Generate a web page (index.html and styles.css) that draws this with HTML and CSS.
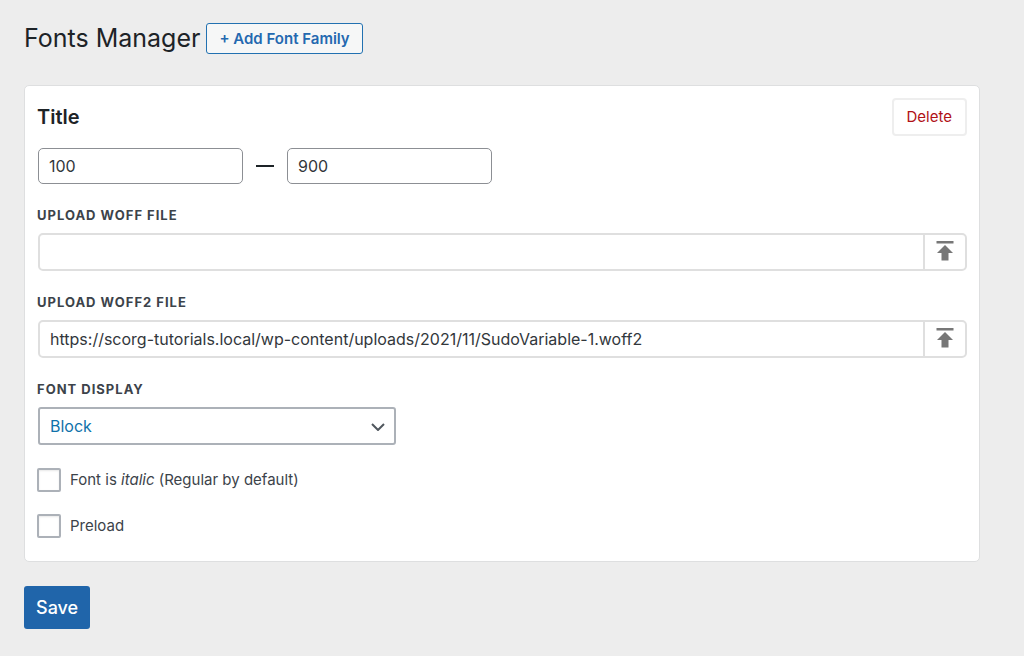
FILE: index.html
```html
<!DOCTYPE html>
<html lang="en">
<head>
<meta charset="utf-8">
<meta name="viewport" content="width=device-width, initial-scale=1">
<title>Fonts Manager</title>
<link rel="stylesheet" href="styles.css">
</head>
<body>
<main class="page">
  <header class="page-header">
    <h1 class="page-title">Fonts Manager</h1>
    <button type="button" class="add-button">+ Add Font Family</button>
  </header>
  <form class="form">
    <section class="card">
      <div class="card-header">
        <h2 class="card-title">Title</h2>
        <button type="button" class="delete-button">Delete</button>
      </div>
      <div class="weights">
        <input class="weight-input" type="text" value="100" aria-label="Minimum weight">
        <span class="dash"></span>
        <input class="weight-input" type="text" value="900" aria-label="Maximum weight">
      </div>
      <div class="field">
        <label class="field-label" for="woff">Upload WOFF File</label>
        <div class="upload">
          <input class="upload-input" id="woff" type="text">
          <button type="button" class="upload-button" aria-label="Choose WOFF file">
            <svg class="upload-icon" viewBox="0 0 18 20" aria-hidden="true"><path d="M.5 0h17v2.500H.5zM9 4 17 12H12.500v7.500H5.500V12H1z"/></svg>
          </button>
        </div>
      </div>
      <div class="field">
        <label class="field-label" for="woff2">Upload WOFF2 File</label>
        <div class="upload">
          <input class="upload-input" id="woff2" type="text" value="https://scorg-tutorials.local/wp-content/uploads/2021/11/SudoVariable-1.woff2">
          <button type="button" class="upload-button" aria-label="Choose WOFF2 file">
            <svg class="upload-icon" viewBox="0 0 18 20" aria-hidden="true"><path d="M.5 0h17v2.500H.5zM9 4 17 12H12.500v7.500H5.500V12H1z"/></svg>
          </button>
        </div>
      </div>
      <div class="field">
        <label class="field-label" for="display">Font Display</label>
        <div class="select-wrap">
          <select class="select" id="display"><option>Block</option></select>
          <svg class="chevron" viewBox="0 0 14 8" aria-hidden="true"><path d="M1 1l6 6 6-6"/></svg>
        </div>
      </div>
      <div class="checks">
        <label class="check"><input class="checkbox" type="checkbox"><span>Font is <em>italic</em> (Regular by default)</span></label>
        <label class="check"><input class="checkbox" type="checkbox"><span>Preload</span></label>
      </div>
    </section>
    <button type="button" class="save-button">Save</button>
  </form>
</main>
</body>
</html>
```
FILE: styles.css
```css
* {
  box-sizing: border-box;
}

body {
  margin: 0;
  background: #ededed;
  color: #1d2327;
  font-family: Inter, "Liberation Sans", sans-serif;
  font-size: 16px;
  line-height: 20px;
}

button,
input,
select {
  margin: 0;
  font: inherit;
}

.page {
  padding: 23px 44px 24px 24px;
}

.page-header {
  display: flex;
  align-items: center;
  gap: 6px;
  margin-bottom: 31px;
}

.page-title {
  margin: 0;
  font-size: 25px;
  font-weight: 400;
  line-height: 31px;
}

.add-button {
  height: 31px;
  padding: 0 12px;
  border: 1px solid #2271b1;
  border-radius: 3px;
  background: #f6f7f7;
  color: #2469b0;
  font-size: 15px;
  font-weight: 600;
}

.form {
  display: flex;
  flex-direction: column;
  align-items: flex-start;
  gap: 24px;
}

.card {
  align-self: stretch;
  padding: 12px 12px 23px;
  border: 1px solid #dedfe0;
  border-radius: 5px;
  background: #fff;
}

.card-header {
  display: flex;
  align-items: center;
  justify-content: space-between;
  margin-bottom: 12px;
}

.card-title {
  margin: 0;
  font-size: 20px;
  font-weight: 600;
}

.delete-button {
  height: 38px;
  padding: 0 13px;
  border: 2px solid #eeeeee;
  border-radius: 4px;
  background: #fff;
  color: #b01116;
  font-size: 15px;
}

.weights {
  display: flex;
  align-items: center;
  gap: 13px;
  margin: 0 0 21px 1px;
}

.weight-input {
  width: 205px;
  height: 36px;
  padding: 0 10px;
  border: 1px solid #8c8f94;
  border-radius: 5px;
  background: #fff;
  color: #32373c;
}

.dash {
  width: 18px;
  height: 2px;
  background: #1d2327;
}

.field {
  margin-bottom: 21px;
}

.field-label {
  display: block;
  margin-bottom: 8px;
  color: #3c434a;
  font-size: 13px;
  font-weight: 700;
  letter-spacing: 1px;
  line-height: 20px;
  text-transform: uppercase;
}

.upload {
  display: flex;
  height: 38px;
  margin-left: 1px;
  border: 2px solid #dfdfdf;
  border-radius: 5px;
}

.upload-input {
  flex: 1;
  min-width: 0;
  padding: 0 10px;
  border: 0;
  background: none;
  color: #32373c;
}

.upload-button {
  display: flex;
  justify-content: center;
  width: 42px;
  padding: 6px 0 0;
  border: 0;
  border-left: 2px solid #dfdfdf;
  background: none;
}

.upload-icon {
  width: 18px;
  height: 20px;
  fill: #777;
}

.select-wrap {
  position: relative;
  max-width: 358px;
  margin-left: 1px;
}

.select {
  display: block;
  width: 100%;
  height: 38px;
  padding: 0 10px;
  border: 2px solid #acb1b8;
  border-radius: 3px;
  background: #fff;
  color: #0f72aa;
  appearance: none;
}

.chevron {
  position: absolute;
  top: 16px;
  right: 11px;
  width: 14px;
  height: 8px;
  fill: none;
  stroke: #50575e;
  stroke-width: 2;
  pointer-events: none;
}

.checks {
  display: flex;
  flex-direction: column;
  align-items: flex-start;
  gap: 22px;
  padding-top: 2px;
}

.check {
  display: flex;
  align-items: center;
  gap: 9px;
  color: #3c434a;
  font-size: 15px;
}

.checkbox {
  width: 24px;
  height: 24px;
  border: 2px solid #acb1b8;
  border-radius: 2px;
  background: #fff;
  box-shadow: inset 0 1px 2px #e8e8e8;
  appearance: none;
}

.save-button {
  height: 43px;
  padding: 0 12px;
  border: 0;
  border-radius: 3px;
  background: #2065aa;
  color: #fff;
  font-size: 18px;
  font-weight: 500;
}
```
